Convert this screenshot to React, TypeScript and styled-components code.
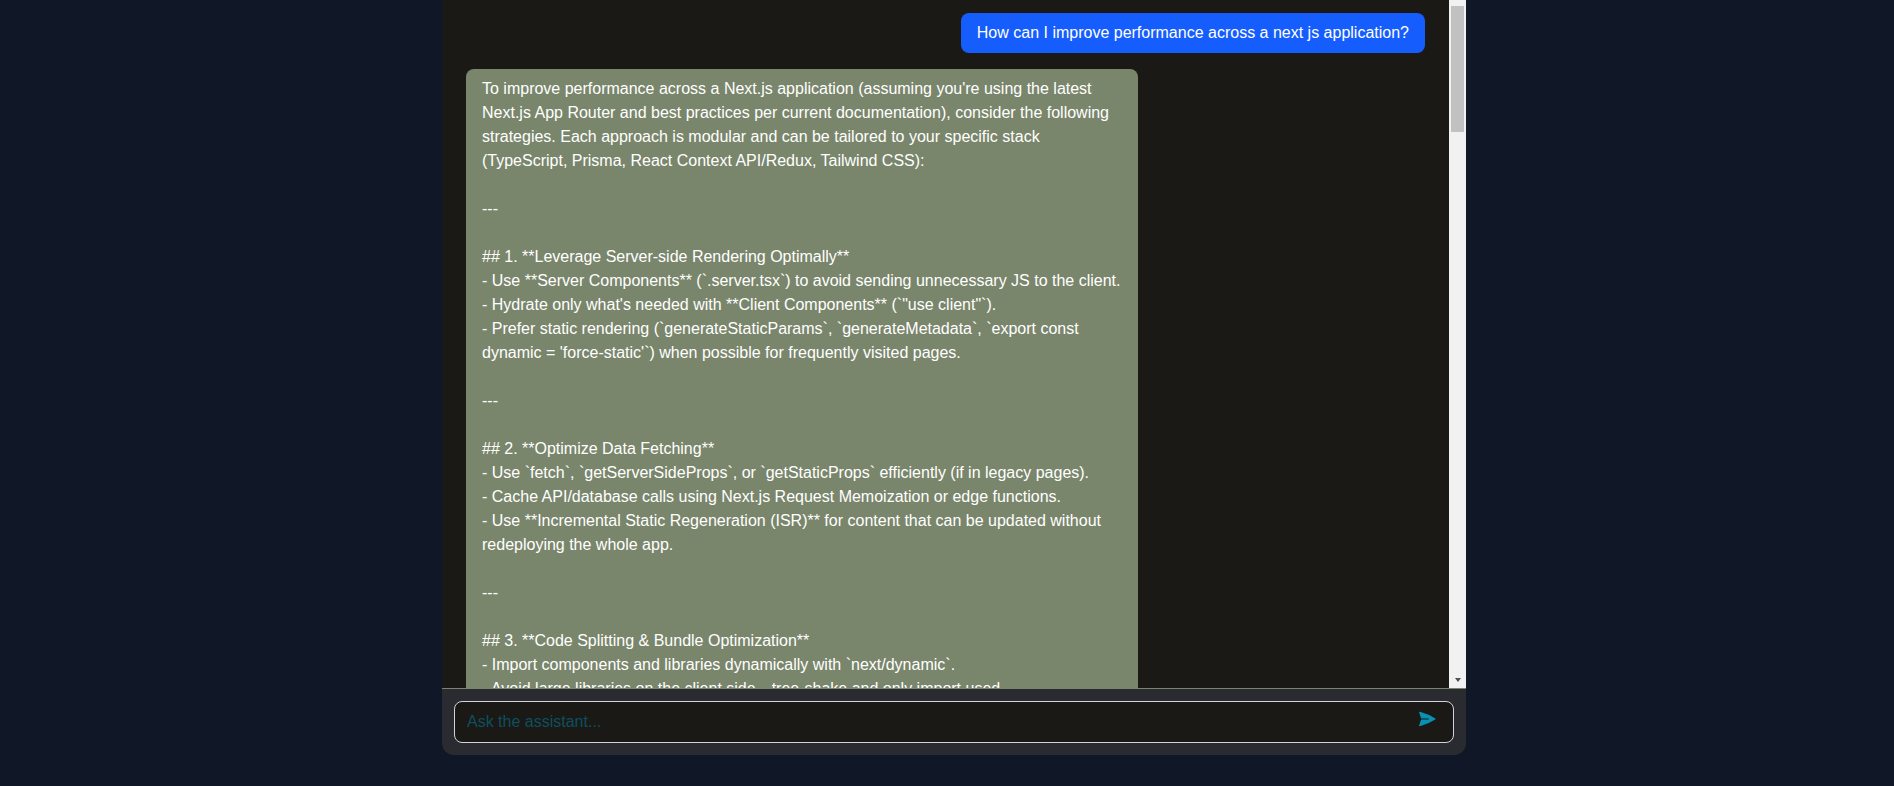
import React from "react";
import styled, { createGlobalStyle } from "styled-components";

const Global = createGlobalStyle`
  html, body { margin: 0; height: 100%; background: #101828; overflow: hidden; }
  #root { height: 100%; }
  * { box-sizing: border-box; }
`;

const Page = styled.div`
  height: 786px;
  display: flex;
  justify-content: center;
  padding-left: 14px;
  padding-bottom: 31px;
  background: #101828;
  font-family: "Liberation Sans", Arial, sans-serif;
  font-size: 16px;
  line-height: 24px;
`;

const Panel = styled.main`
  width: 1024px;
  display: flex;
  flex-direction: column;
  background: #1a1915;
  border-radius: 0 0 12px 12px;
  overflow: hidden;
`;

const ChatArea = styled.div`
  flex: 1;
  min-height: 0;
  display: flex;
`;

const Messages = styled.section`
  flex: 1;
  min-width: 0;
  overflow: hidden;
  padding: 13px 24px 24px;
  display: flex;
  flex-direction: column;
  gap: 16px;
`;

const ScrollTrack = styled.div`
  flex: none;
  width: 17px;
  display: flex;
  flex-direction: column;
  align-items: center;
  background: #f1f1f1;
`;

const ScrollThumb = styled.div`
  width: 13px;
  height: 126px;
  margin-top: 6px;
  background: #c1c1c1;
`;

const ScrollButton = styled.div`
  margin-top: auto;
  width: 17px;
  height: 17px;
  display: flex;
  align-items: center;
  justify-content: center;

  &::before {
    content: "";
    border-left: 3.5px solid transparent;
    border-right: 3.5px solid transparent;
    border-top: 4px solid #505050;
  }
`;

const UserBubble = styled.div`
  align-self: flex-end;
  flex: none;
  padding: 8px 16px;
  border-radius: 8px;
  background: #155dfc;
  color: #fff;
`;

const AssistantBubble = styled.div`
  align-self: flex-start;
  flex: none;
  width: 672px;
  padding: 8px 16px;
  border-radius: 8px;
  background: #7a866c;
  color: #fff;
  white-space: pre-wrap;
`;

const Composer = styled.form`
  flex: none;
  height: 67px;
  padding: 12px;
  background: #2a2b30;
  border-top: 1px solid #7a866c;
`;

const InputBox = styled.div`
  height: 42px;
  display: flex;
  align-items: center;
  background: #1a1915;
  border: 1px solid #d1d5db;
  border-radius: 8px;
`;

const TextInput = styled.input`
  flex: 1;
  min-width: 0;
  height: 100%;
  padding: 0 12px;
  border: 0;
  outline: 0;
  background: transparent;
  color: #fff;
  font: inherit;

  &::placeholder { color: #0e4f5f; opacity: 1; }
`;

const SendButton = styled.button`
  flex: none;
  display: flex;
  align-items: center;
  width: 20px;
  height: 20px;
  margin: 0 16px 7px 0;
  padding: 0;
  border: 0;
  background: none;
  color: #0891b2;
`;

const message = `To improve performance across a Next.js application (assuming you're using the latest Next.js App Router and best practices per current documentation), consider the following strategies. Each approach is modular and can be tailored to your specific stack (TypeScript, Prisma, React Context API/Redux, Tailwind CSS):

---

## 1. **Leverage Server-side Rendering Optimally**
- Use **Server Components** (\`.server.tsx\`) to avoid sending unnecessary JS to the client.
- Hydrate only what's needed with **Client Components** (\`"use client"\`).
- Prefer static rendering (\`generateStaticParams\`, \`generateMetadata\`, \`export const dynamic = 'force-static'\`) when possible for frequently visited pages.

---

## 2. **Optimize Data Fetching**
- Use \`fetch\`, \`getServerSideProps\`, or \`getStaticProps\` efficiently (if in legacy pages).
- Cache API/database calls using Next.js Request Memoization or edge functions.
- Use **Incremental Static Regeneration (ISR)** for content that can be updated without redeploying the whole app.

---

## 3. **Code Splitting & Bundle Optimization**
- Import components and libraries dynamically with \`next/dynamic\`.
- Avoid large libraries on the client side—tree-shake and only import used`;

export default function App() {
  return (
    <Page>
      <Global />
      <Panel>
        <ChatArea>
          <Messages>
            <UserBubble>How can I improve performance across a next js application?</UserBubble>
            <AssistantBubble>{message}</AssistantBubble>
          </Messages>
          <ScrollTrack>
            <ScrollThumb />
            <ScrollButton />
          </ScrollTrack>
        </ChatArea>
        <Composer onSubmit={(e) => e.preventDefault()}>
          <InputBox>
            <TextInput placeholder="Ask the assistant..." />
            <SendButton type="submit" aria-label="Send">
              <svg viewBox="0 0 24 24" width="20" height="18" preserveAspectRatio="none" fill="currentColor">
                <path d="M3.478 2.404a.75.75 0 0 0-.926.941l2.432 7.905H13.5a.75.75 0 0 1 0 1.5H4.984l-2.432 7.905a.75.75 0 0 0 .926.94 60.519 60.519 0 0 0 18.445-8.986.75.75 0 0 0 0-1.218A60.517 60.517 0 0 0 3.478 2.404Z" />
              </svg>
            </SendButton>
          </InputBox>
        </Composer>
      </Panel>
    </Page>
  );
}
